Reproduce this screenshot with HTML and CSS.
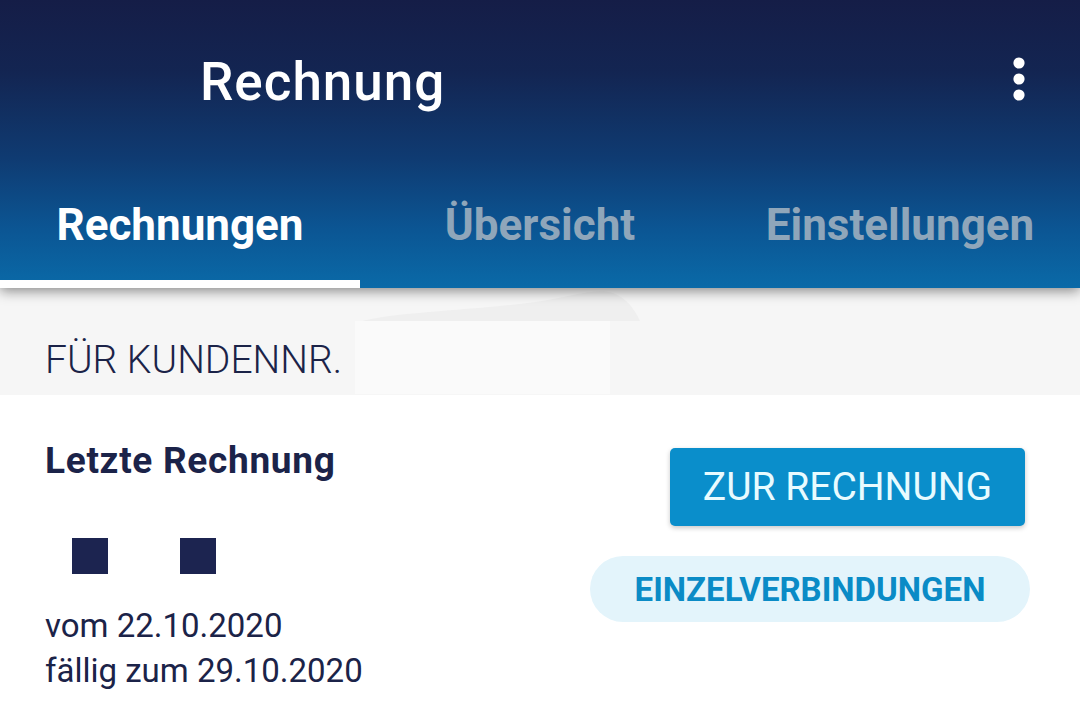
FILE: index.html
```html
<!DOCTYPE html>
<html lang="de">
<head>
<meta charset="utf-8">
<title>Rechnung</title>
<link rel="stylesheet" href="styles.css">
</head>
<body>
<header class="appbar">
  <div class="toolbar">
    <h1 class="title">Rechnung</h1>
    <svg class="menu" width="24" height="44" viewBox="0 0 24 44" aria-hidden="true">
      <circle cx="12" cy="6" r="5.6" fill="#fff"/>
      <circle cx="12" cy="22" r="5.6" fill="#fff"/>
      <circle cx="12" cy="38" r="5.6" fill="#fff"/>
    </svg>
  </div>
  <nav class="tabs">
    <div class="tab active"><span class="tab-label">Rechnungen</span><span class="indicator"></span></div>
    <div class="tab"><span class="tab-label">Übersicht</span><span class="indicator"></span></div>
    <div class="tab"><span class="tab-label">Einstellungen</span><span class="indicator"></span></div>
  </nav>
</header>
<section class="customer">
  <svg class="redact" width="290" height="106" viewBox="0 0 290 106" aria-hidden="true">
    <rect x="0" y="33" width="255" height="73" fill="#fafafa"/>
    <path d="M7 33 C 40 24, 120 22, 180 14 C 215 9, 238 0, 258 5 C 272 10, 280 22, 285 33 Z" fill="#efefef"/>
  </svg>
  <p class="customer-label">FÜR KUNDENNR.</p>
</section>
<main class="content">
  <div class="bill">
    <h2 class="bill-title">Letzte Rechnung</h2>
    <div class="squares"><span class="sq"></span><span class="sq"></span></div>
    <p class="date">vom 22.10.2020</p>
    <p class="date">fällig zum 29.10.2020</p>
  </div>
  <div class="actions">
    <button class="btn-primary">ZUR RECHNUNG</button>
    <button class="btn-pill">EINZELVERBINDUNGEN</button>
  </div>
</main>
</body>
</html>
```
FILE: styles.css
```css
* { box-sizing: border-box; }
html, body {
  margin: 0;
  padding: 0;
  background: #ffffff;
  font-family: Roboto, "Liberation Sans", Arial, sans-serif;
  width: 1080px;
  height: 713px;
  overflow: hidden;
}
.appbar {
  position: relative;
  z-index: 2;
  height: 288px;
  background: linear-gradient(180deg, #151d47 0%, #132552 25%, #0f3b72 55%, #0b5694 80%, #0a6aa8 100%);
  box-shadow: 0 3px 12px rgba(0, 0, 0, 0.45);
  display: flex;
  flex-direction: column;
}
.toolbar {
  height: 164px;
  display: flex;
  align-items: center;
  justify-content: space-between;
  padding-left: 200px;
  padding-right: 49px;
}
.title {
  margin: 0;
  color: #ffffff;
  font-size: 53px;
  line-height: 1;
  font-weight: 500;
  letter-spacing: 1px;
}
.menu { display: block; margin-bottom: 6px; }
.tabs {
  flex: 1;
  display: grid;
  grid-template-columns: repeat(3, 1fr);
}
.tab {
  display: flex;
  flex-direction: column;
}
.tab-label {
  flex: 1;
  display: flex;
  align-items: center;
  justify-content: center;
  font-size: 44px;
  line-height: 1;
  font-weight: 700;
  color: #8fa6ba;
  padding-top: 5px;
}
.indicator { height: 8px; }
.tab.active .tab-label { color: #ffffff; }
.tab.active .indicator { background: #ffffff; }
.customer {
  position: relative;
  height: 107px;
  background: #f6f6f6;
  padding: 53px 0 0 45px;
}
.redact {
  position: absolute;
  left: 355px;
  top: 0;
}
.customer-label {
  position: relative;
  margin: 0;
  font-size: 39px;
  line-height: 1;
  font-weight: 300;
  color: #1b2348;
}
.content {
  display: flex;
  justify-content: space-between;
}
.bill {
  padding: 47px 0 0 45px;
  color: #1b2348;
}
.bill-title {
  margin: 0;
  font-size: 37px;
  line-height: 1;
  font-weight: 700;
  letter-spacing: 0.7px;
  color: #1b2349;
}
.squares {
  display: flex;
  gap: 72px;
  margin: 59px 0 29px 27px;
}
.sq {
  width: 36px;
  height: 36px;
  background: #1c2450;
}
.date {
  margin: 0;
  font-size: 33px;
  line-height: 45px;
  font-weight: 400;
}
.actions {
  display: flex;
  flex-direction: column;
  align-items: flex-end;
  gap: 30px;
  padding: 53px 55px 0 0;
}
.btn-primary {
  width: 355px;
  height: 78px;
  border: 0;
  border-radius: 5px;
  background: #0a8ecb;
  color: #e8fbff;
  font-family: inherit;
  font-size: 39px;
  font-weight: 400;
  box-shadow: 0 2px 5px rgba(0, 0, 0, 0.22);
  padding: 0;
}
.btn-pill {
  width: 440px;
  height: 66px;
  margin-right: -5px;
  border: 0;
  border-radius: 33px;
  background: #e3f4fb;
  color: #0a8bc6;
  font-family: inherit;
  font-size: 33px;
  font-weight: 700;
  padding: 0;
}
```
